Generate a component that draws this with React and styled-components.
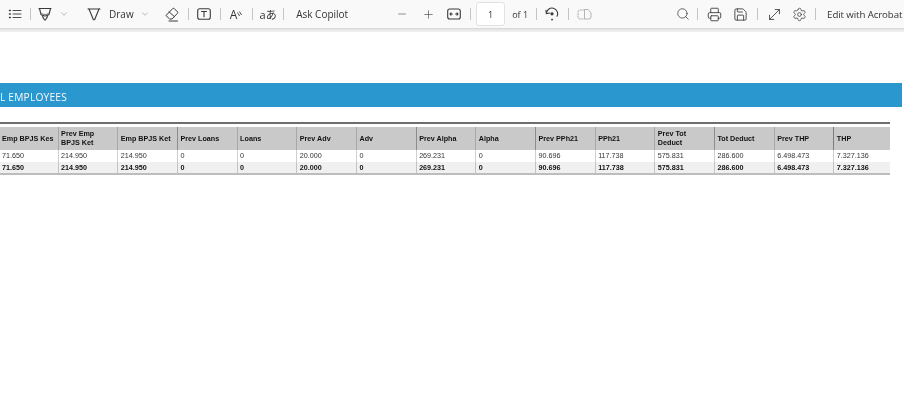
import React from "react";
import styled, { createGlobalStyle } from "styled-components";
import { Minus, Plus, Search, Printer, Save, Settings, MoveDiagonal, ChevronDown } from "lucide-react";

const GlobalStyle = createGlobalStyle`
  html, body {
    margin: 0;
    padding: 0;
    background: #fff;
    overflow: hidden;
  }
`;

const Page = styled.div`
  width: 904px;
  height: 417px;
  overflow: hidden;
  background: #fff;
`;

const Toolbar = styled.div`
  display: flex;
  align-items: center;
  height: 28px;
  padding-left: 3px;
  background: #f9f9f9;
  color: #333;
  white-space: nowrap;
  overflow: hidden;
  font-family: "Open Sans", "Noto Sans", sans-serif;
  font-size: 10px;
  will-change: transform;
`;

const ToolbarEdge = styled.div`
  height: 4px;
  background: linear-gradient(#d4d4d4, #e6e6e6 40%, #f3f3f3);
`;

const Slot = styled.div`
  display: flex;
  flex: none;
  align-items: center;
  justify-content: center;
  width: ${(p) => p.$w || 22}px;
  height: 28px;
  margin-left: ${(p) => p.$ml || 0}px;
  color: ${(p) => p.$color || "#3a3a3a"};
`;

const Sep = styled.div`
  flex: none;
  width: 1px;
  height: 12px;
  margin-left: ${(p) => p.$l}px;
  margin-right: ${(p) => p.$r}px;
  background: #c4c4c4;
`;

const Label = styled.span`
  flex: none;
  margin-left: ${(p) => p.$ml || 0}px;
  font-size: ${(p) => p.$size || 10}px;
  letter-spacing: ${(p) => p.$track || 0}px;
  color: #333;
`;

const KanaLabel = styled(Label)`
  font-family: "Open Sans", "Noto Sans CJK JP", sans-serif;
`;

const PageInput = styled.div`
  display: flex;
  flex: none;
  align-items: center;
  justify-content: center;
  box-sizing: border-box;
  width: 29px;
  height: 24px;
  margin-left: 5px;
  background: #fff;
  border: 1px solid #e2e2e2;
  border-radius: 3px;
  font-size: 9px;
`;

const Banner = styled.div`
  display: flex;
  align-items: center;
  box-sizing: border-box;
  width: 902px;
  height: 24px;
  margin-top: 51px;
  padding-top: 3px;
  background: #2b97cf;
  color: #f4fafd;
  font-family: "Open Sans", sans-serif;
  font-size: 10.2px;
  letter-spacing: 0.2px;
  will-change: transform;
`;

const TableWrap = styled.div`
  width: 890px;
  margin-top: 15px;
  padding-top: 3px;
  border-top: 2px solid #6e6e6e;
  font-family: "Liberation Sans", Arial, sans-serif;
  font-size: 7.2px;
  color: #222;
  will-change: transform;
`;

const Row = styled.div`
  display: grid;
  grid-template-columns: 57.5px repeat(13, 59.68px) 1fr;
  height: ${(p) => p.$h}px;
  background: ${(p) => p.$bg || "#fff"};
  font-weight: ${(p) => (p.$bold ? 700 : 400)};
  color: ${(p) => (p.$bold ? "#111" : "#333")};
  border-bottom: ${(p) => p.$line || "none"};
`;

const Cell = styled.div`
  display: flex;
  align-items: center;
  box-sizing: border-box;
  padding-left: ${(p) => (p.$first ? 1 : 2.6)}px;
  padding-top: ${(p) => p.$top || 0}px;
  line-height: 8.6px;
  border-left: 1px solid ${(p) => (p.$first ? "transparent" : p.$edge)};
`;

const Wrapped = styled.span`
  display: block;
  max-width: ${(p) => (p.$narrow ? 40 : 56)}px;
`;

const stroke = { fill: "none", stroke: "currentColor", strokeWidth: 1.1, strokeLinecap: "round", strokeLinejoin: "round" };

const ListIcon = () => (
  <svg width="14" height="12" viewBox="0 0 14 12" {...stroke}>
    <path d="M1.5 2.5h.8M1.5 6h.8M1.5 9.5h.8" strokeWidth="1.5" />
    <path d="M5 2.5h8M5 6h8M5 9.5h8" strokeWidth="0.9" />
  </svg>
);

const HighlightIcon = () => (
  <svg width="14" height="14" viewBox="0 0 14 14" {...stroke}>
    <path d="M1 1.5h12" />
    <path d="M1.5 1.5 L3 7.5 Q7 10.5 11 7.5 L12.5 1.5" />
    <path d="M3.4 6.5 Q7 8.8 10.6 6.5" stroke="#888" strokeWidth="1.4" />
    <path d="M4.5 9.6 L6.6 13 H7.4 L9.5 9.6" />
  </svg>
);

const DrawIcon = () => (
  <svg width="14" height="14" viewBox="0 0 14 14" {...stroke}>
    <path d="M1 2h12" />
    <path d="M2 2 L6.3 12.5 Q7 13 7.7 12.5 L12 2" />
  </svg>
);

const EraserIcon = () => (
  <svg width="14" height="15" viewBox="0 0 14 15" {...stroke} strokeWidth="1">
    <path d="M1.2 8.2 L7.8 1.5 Q8.5 1 9.2 1.5 L12.6 5 Q13 5.7 12.5 6.3 L7 12 H5 Z" />
    <path d="M4 4.8 L9.4 9.6" />
    <path d="M4 14h8.5" />
  </svg>
);

const TextBoxIcon = () => (
  <svg width="14" height="12" viewBox="0 0 14 12" {...stroke}>
    <rect x="0.7" y="0.7" width="12.6" height="10.6" rx="2" />
    <path d="M4.5 3.5h5M7 3.5v5.2" />
  </svg>
);

const WavesIcon = () => (
  <svg width="5" height="6" viewBox="0 0 5 6" fill="none" stroke="currentColor" strokeWidth="0.9">
    <path d="M0.5 1.5 L2.6 5 M2.4 0.5 L4.6 4" />
  </svg>
);

const FitIcon = () => (
  <svg width="14" height="12" viewBox="0 0 14 12" {...stroke}>
    <rect x="0.7" y="1" width="12.6" height="10" rx="2" />
    <path d="M3 6h2.4M4 4.8 L3 6 L4 7.2M11 6H8.6M10 4.8 L11 6 L10 7.2" />
  </svg>
);

const RotateIcon = () => (
  <svg width="14" height="14" viewBox="0 0 14 14" {...stroke}>
    <path d="M1.4 6.5 A5.6 5.6 0 1 1 12 9.2" />
    <path d="M1 3.2 L1.4 6.7 L4.6 6" />
    <circle cx="7" cy="6.8" r="1.1" fill="currentColor" />
    <path d="M7 12.6h.1" strokeWidth="1.8" />
  </svg>
);

const TwoPageIcon = () => (
  <svg width="15" height="12" viewBox="0 0 15 12" {...stroke} strokeWidth="1">
    <path d="M7.5 2 H3 Q1 2 1 4 V9 Q1 11 3 11 H7.5 Z" strokeDasharray="1.6 1.2" />
    <path d="M7.5 2 V11 H12 Q14 11 14 9 V5 L11 1.5 H7.5" />
  </svg>
);

const Chevron = () => <ChevronDown size={10} strokeWidth={1.2} color="#777" />;

const headers = [
  ["Emp BPJS Kes", "#a8a8a8"], ["Prev Emp BPJS Ket", "#a8a8a8"], ["Emp BPJS Ket", "#a8a8a8"],
  ["Prev Loans", "#8c8c8c"], ["Loans", "#a8a8a8"], ["Prev Adv", "#a8a8a8"], ["Adv", "#a8a8a8"],
  ["Prev Alpha", "#8c8c8c"], ["Alpha", "#a8a8a8"], ["Prev PPh21", "#8c8c8c"], ["PPh21", "#a8a8a8"],
  ["Prev Tot Deduct", "#a8a8a8"], ["Tot Deduct", "#8c8c8c"], ["Prev THP", "#a8a8a8"], ["THP", "#7c7c7c"],
];

const values = [
  "71.650", "214.950", "214.950", "0", "0", "20.000", "0", "269.231",
  "0", "90.696", "117.738", "575.831", "286.600", "6.498.473", "7.327.136",
];

export default function App() {
  return (
    <Page>
      <GlobalStyle />
      <Toolbar>
        <Slot $w={24}><ListIcon /></Slot>
        <Sep $l={3} $r={3} />
        <Slot $w={22}><HighlightIcon /></Slot>
        <Slot $w={16}><Chevron /></Slot>
        <Slot $w={22} $ml={11}><DrawIcon /></Slot>
        <Label $ml={4} $size={10}>Draw</Label>
        <Slot $w={16} $ml={3}><Chevron /></Slot>
        <Slot $w={22} $ml={8}><EraserIcon /></Slot>
        <Sep $l={5.5} $r={4.5} />
        <Slot $w={20}><TextBoxIcon /></Slot>
        <Sep $l={6} $r={5.5} />
        <Slot $w={20}><Label $size={12}>A</Label><WavesIcon /></Slot>
        <Sep $l={5.5} $r={5.5} />
        <Slot $w={20}><KanaLabel $size={11}>aあ</KanaLabel></Slot>
        <Sep $l={5} $r={12} />
        <Label $size={10}>Ask Copilot</Label>
        <Slot $w={20} $ml={44}><Minus size={12} strokeWidth={1.1} /></Slot>
        <Slot $w={20} $ml={6}><Plus size={13} strokeWidth={1.1} /></Slot>
        <Slot $w={20} $ml={6}><FitIcon /></Slot>
        <Sep $l={6} $r={0} />
        <PageInput>1</PageInput>
        <Label $ml={7} $size={9}>of 1</Label>
        <Sep $l={8} $r={0} />
        <Slot $w={20} $ml={5}><RotateIcon /></Slot>
        <Sep $l={5.5} $r={0} />
        <Slot $w={20} $ml={6} $color="#b4b4b4"><TwoPageIcon /></Slot>
        <Slot $w={20} $ml={78}><Search size={14} strokeWidth={1.3} /></Slot>
        <Sep $l={4.5} $r={0} />
        <Slot $w={20} $ml={6.5}><Printer size={15} strokeWidth={1.4} /></Slot>
        <Slot $w={20} $ml={6}><Save size={15} strokeWidth={1.4} /></Slot>
        <Sep $l={6} $r={0} />
        <Slot $w={20} $ml={6.5}><MoveDiagonal size={17} strokeWidth={1.2} /></Slot>
        <Slot $w={20} $ml={5}><Settings size={15} strokeWidth={1.2} /></Slot>
        <Sep $l={6} $r={11} />
        <Label $size={9.7} $track={-0.1}>Edit with Acrobat</Label>
      </Toolbar>
      <ToolbarEdge />
      <Banner>L EMPLOYEES</Banner>
      <TableWrap>
        <Row $h={23} $bg="#c9c9c9" $bold>
          {headers.map(([text, edge], i) => (
            <Cell key={text} $first={i === 0} $edge={edge} $top={1}>
              <Wrapped $narrow={text.length > 12}>{text}</Wrapped>
            </Cell>
          ))}
        </Row>
        <Row $h={12}>
          {values.map((v, i) => (
            <Cell key={i} $first={i === 0} $edge="#d0d0d0">{v}</Cell>
          ))}
        </Row>
        <Row $h={11} $bg="#f0f0f0" $bold $line="2px solid #bdbdbd">
          {values.map((v, i) => (
            <Cell key={i} $first={i === 0} $edge="#c4c4c4" $top={1}>{v}</Cell>
          ))}
        </Row>
      </TableWrap>
    </Page>
  );
}
